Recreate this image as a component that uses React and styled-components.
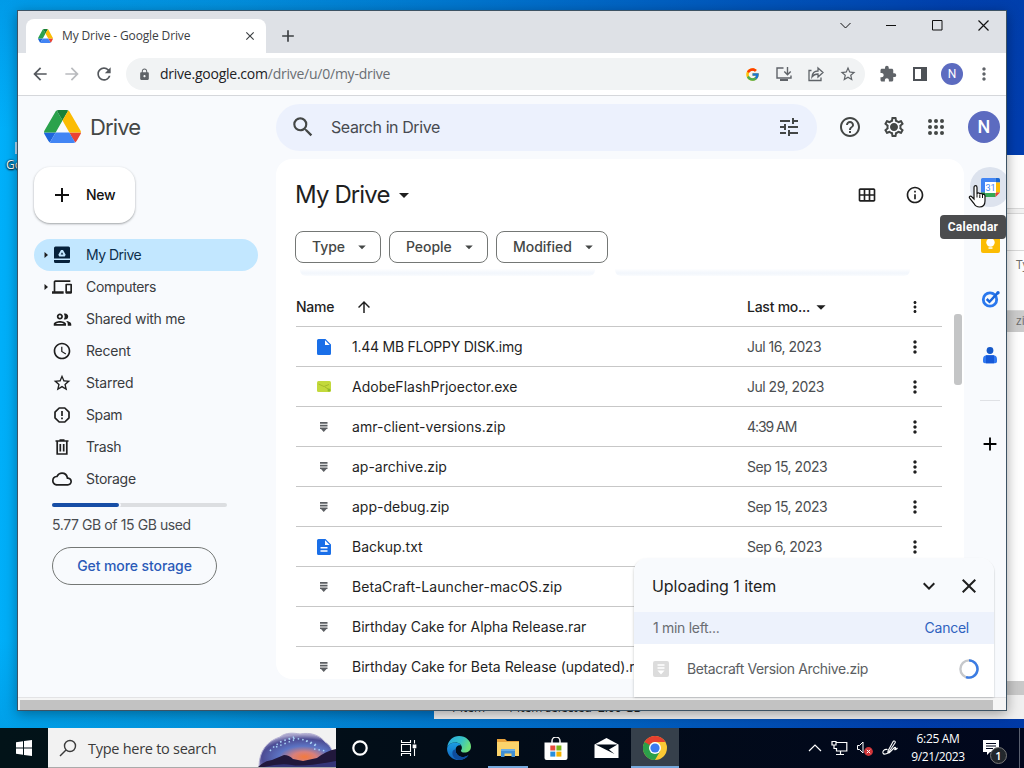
import React from 'react';
import styled, { createGlobalStyle } from 'styled-components';
import {
  MdAdd,
  MdArrowBack,
  MdArrowDropDown,
  MdArrowForward,
  MdArrowUpward,
  MdCalendarViewMonth,
  MdClose,
  MdDevices,
  MdExtension,
  MdHelpOutline,
  MdKeyboardArrowDown,
  MdLock,
  MdMoreVert,
  MdOutlineCloud,
  MdOutlineGroup,
  MdOutlineInfo,
  MdOutlineSettings,
  MdRefresh,
  MdSchedule,
  MdSearch,
  MdStarBorder,
  MdTune
} from 'react-icons/md';
import { FcGoogle } from 'react-icons/fc';

const google = `Inter, Roboto, 'Liberation Sans', sans-serif`;
const segoe = `'Open Sans', 'Noto Sans', sans-serif`;

const GlobalStyle = createGlobalStyle`
  * {
    box-sizing: border-box;
  }
  body {
    margin: 0;
    overflow: hidden;
  }
  svg {
    display: block;
    flex: none;
  }
`;

const Screen = styled.div`
  width: 1024px;
  height: 768px;
  display: flex;
  flex-direction: column;
  overflow: hidden;
  font-family: ${google};
`;

const Desktop = styled.div`
  position: relative;
  flex: 1;
  overflow: hidden;
  background: linear-gradient(
      180deg,
      rgba(0, 70, 160, 0.2) 0,
      rgba(0, 70, 160, 0) 130px,
      rgba(0, 30, 90, 0) 640px,
      rgba(0, 30, 90, 0.1) 728px
    ),
    linear-gradient(
      92deg,
      #00b0fa 0%,
      #03a0ea 22%,
      #0078d4 50%,
      #0058c0 72%,
      #0040b2 90%,
      #003cae 100%
    );
`;

const DesktopLabel = styled.span`
  position: absolute;
  left: 6px;
  top: 157px;
  color: #fff;
  font: 12px/16px ${segoe};
  text-shadow: 0 1px 2px #000, 0 0 2px #000;
`;

const DesktopShortcut = styled.span`
  position: absolute;
  left: 15px;
  top: 142px;
  width: 2px;
  height: 12px;
  background: #b5dcf6;
`;

/* File explorer, mostly covered by the browser */
const Explorer = styled.div`
  position: absolute;
  left: 434px;
  top: 155px;
  width: 680px;
  height: 564px;
  display: flex;
  flex-direction: column;
  background: #fff;
  color: #6d6d6d;
  font: 12px/16px ${segoe};
`;

const ExplorerBar = styled.div`
  height: ${props => props.$height}px;
  padding-top: ${props => props.$pad || 0}px;
  padding-left: 582px;
  background: ${props => props.$bg || '#fdfdfd'};
  border-bottom: 1px solid ${props => props.$line || '#d9d9d9'};
`;

const ExplorerBody = styled.div`
  flex: 1;
`;

const ExplorerStatus = styled.div`
  height: 24px;
  padding: 5px 16px 0;
  display: flex;
  gap: 22px;
  background: #f0f0f0;
  color: #222;
  font-size: 12px;
  line-height: 16px;
`;

const Browser = styled.div`
  position: absolute;
  left: 17px;
  top: 10px;
  width: 990px;
  height: 701px;
  display: flex;
  flex-direction: column;
  background: #fff;
  border: 1px solid #3d5364;
  box-shadow: 0 3px 12px rgba(0, 0, 0, 0.35);
`;

const TitleBar = styled.div`
  height: 42px;
  flex: none;
  display: flex;
  align-items: flex-end;
  padding-left: 8px;
  background: #dee1e6;
`;

const Tab = styled.div`
  width: 240px;
  height: 34px;
  display: flex;
  align-items: center;
  padding: 0 9px 0 12px;
  border-radius: 8px 8px 0 0;
  background: #fff;
  color: #3c4043;
`;

const TabTitle = styled.span`
  flex: 1;
  margin-left: 9px;
  font: 12px/16px ${segoe};
  letter-spacing: -0.13px;
`;

const NewTab = styled.div`
  margin: 0 auto 7px 12px;
  color: #3c4043;
`;

const WindowButtons = styled.div`
  display: flex;
  align-self: flex-start;
  color: #111;
`;

const WindowButton = styled.div`
  width: 46px;
  height: 29px;
  display: grid;
  place-items: center;
`;

const Toolbar = styled.div`
  height: 43px;
  flex: none;
  display: flex;
  align-items: center;
  padding-left: 12px;
  border-bottom: 1px solid #d5d7db;
  background: #fff;
  color: #5f6368;
`;

const NavButton = styled.div`
  width: 32px;
  display: flex;
  color: ${props => (props.$dim ? '#b9bbbe' : '#54585d')};
`;

const AddressBar = styled.div`
  width: 739px;
  height: 32px;
  display: flex;
  align-items: center;
  margin-right: 7px;
  padding: 0 1px 0 12px;
  border-radius: 17px;
  background: #f1f3f4;
`;

const Url = styled.div`
  flex: 1;
  margin-left: 9px;
  color: #6a6e73;
  font: 14px/20px ${segoe};
  letter-spacing: ${props => props.$track}px;

  b {
    color: #202124;
    font-weight: 400;
  }
`;

const IconStrip = styled.div`
  display: flex;
  align-items: center;
`;

const IconSlot = styled.div`
  width: 32px;
  display: grid;
  place-items: center;
`;

const Avatar = styled.div`
  width: ${props => props.$size}px;
  height: ${props => props.$size}px;
  display: grid;
  place-items: center;
  border-radius: 50%;
  background: #5c6bc0;
  color: #fff;
  font: ${props => props.$weight || 400} ${props => props.$font}px/1 Roboto, sans-serif;
`;

const Page = styled.div`
  height: 601px;
  flex: none;
  display: flex;
  flex-direction: column;
  overflow: hidden;
  background: #f8fafd;
`;

const Header = styled.div`
  height: 63px;
  flex: none;
  display: flex;
  align-items: center;
  padding: 0 6px 0 26px;
  color: #444746;
`;

const Brand = styled.div`
  width: 232px;
  display: flex;
  align-items: center;
  gap: 9px;
  padding-bottom: 2px;
  color: #444746;
  font-size: 22px;
  line-height: 28px;
  letter-spacing: ${props => props.$track}px;
`;

const SearchBox = styled.div`
  width: 541px;
  height: 47px;
  display: flex;
  align-items: center;
  padding: 0 16px 1px 14px;
  border-radius: 24px;
  background: #ecf1fd;
`;

const SearchText = styled.span`
  flex: 1;
  margin-left: 15px;
  color: #474a50;
  font-size: 16px;
  letter-spacing: ${props => props.$track}px;
`;

const HeaderIcons = styled.div`
  flex: 1;
  display: flex;
  align-items: center;
  padding: 0 0 1px 21px;
`;

const HeaderIcon = styled.div`
  width: 24px;
  display: grid;
  place-items: center;
  margin-right: ${props => props.$gap}px;
`;

const Main = styled.div`
  flex: 1;
  min-height: 0;
  display: flex;
`;

const Sidebar = styled.div`
  width: 258px;
  flex: none;
  padding: 8px 18px 0 16px;
`;

const NewButton = styled.div`
  width: 101px;
  height: 56px;
  display: flex;
  align-items: center;
  gap: 12px;
  padding: 0 0 1px 16px;
  border-radius: 16px;
  background: #fff;
  box-shadow: 0 1px 2px rgba(60, 64, 67, 0.35), 0 1px 3px rgba(60, 64, 67, 0.15);
  color: #111;
  font-size: 14px;
  font-weight: 500;
  letter-spacing: ${props => props.$track}px;
`;

const NavList = styled.div`
  margin-top: 16px;
`;

const NavItem = styled.div`
  height: 32px;
  display: flex;
  align-items: center;
  padding-left: 10px;
  border-radius: 16px;
  background: ${props => (props.$active ? '#c2e7ff' : 'transparent')};
  color: #1f1f1f;

  svg.caret {
    visibility: ${props => (props.$expandable ? 'visible' : 'hidden')};
  }
`;

const NavIcon = styled.span`
  width: 20px;
  margin: 0 14px 0 4px;
  display: grid;
  place-items: center;
`;

const NavLabel = styled.span`
  padding-bottom: 1px;
  color: ${props => (props.$active ? '#0d2f4d' : '#3a3c3f')};
  font-size: 14px;
  line-height: 17px;
  letter-spacing: ${props => props.$track || 0}px;
`;

const Storage = styled.div`
  padding: 8px 31px 0 18px;
`;

const StorageTrack = styled.div`
  height: 4px;
  border-radius: 2px;
  background: #dcdee1;
`;

const StorageFill = styled.div`
  height: 4px;
  border-radius: 2px;
  background: #174ea6;
  box-shadow: 2px 0 0 #f8fafd;
`;

const StorageText = styled.div`
  margin-top: 8px;
  color: #494c50;
  font-size: 14px;
  line-height: 20px;
  white-space: nowrap;
  letter-spacing: ${props => props.$track}px;
`;

const StorageButton = styled.div`
  width: 165px;
  height: 38px;
  display: grid;
  place-items: center;
  margin-top: 12px;
  padding-bottom: 1px;
  border: 1px solid #747775;
  border-radius: 19px;
  color: #2b5ab8;
  font-size: 14px;
  font-weight: 500;
  white-space: nowrap;
  letter-spacing: ${props => props.$track}px;
`;

const Panel = styled.div`
  width: 688px;
  height: 520px;
  flex: none;
  display: flex;
  overflow: hidden;
  padding-left: 20px;
  border-radius: 16px;
  background: #fff;
`;

const Content = styled.div`
  width: 646px;
  flex: none;
`;

const TitleRow = styled.div`
  height: 72px;
  display: flex;
  align-items: center;
  color: #1f1f1f;
`;

const Title = styled.h1`
  margin: 0 2px 0 -1px;
  font-size: 24px;
  font-weight: 400;
  line-height: 32px;
  letter-spacing: ${props => props.$track}px;
`;

const TitleActions = styled.div`
  display: flex;
  gap: 28px;
  margin-left: auto;
  margin-right: 17px;
`;

const Chips = styled.div`
  display: flex;
  gap: 8px;
  margin-left: -1px;
`;

const Chip = styled.div`
  width: ${props => props.$width}px;
  height: 32px;
  display: flex;
  align-items: center;
  justify-content: space-between;
  padding: 0 9px 1px 16px;
  border: 1px solid #747775;
  border-radius: 8px;
  color: #444746;
  font-size: 14px;
  font-weight: 500;
  letter-spacing: -0.05px;
`;

const CardEdges = styled.div`
  height: 24px;
  display: flex;
  gap: 20px;
  padding: 6px 0 0 4px;
`;

const CardEdge = styled.div`
  width: 295px;
  height: 7px;
  border-radius: 0 0 6px 6px;
  background: linear-gradient(#fdfeff, #f2f6fc 60%, #fafcfe);
`;

const ListHeader = styled.div`
  height: 40px;
  display: grid;
  grid-template-columns: 451px 1fr 54px;
  align-items: center;
  border-bottom: 1px solid #c7c7c7;
  color: #1f1f1f;
  font-size: 14px;
  font-weight: 500;
`;

const HeaderCell = styled.div`
  display: flex;
  align-items: center;
  gap: ${props => props.$gap}px;
  justify-content: ${props => (props.$center ? 'center' : 'flex-start')};
  letter-spacing: ${props => props.$track || 0}px;
`;

const FileRow = styled.div`
  height: 40px;
  display: grid;
  grid-template-columns: 56px 395px 1fr 54px;
  align-items: center;
  border-bottom: 1px solid #c7c7c7;
  font-size: 14px;
  color: #1f1f1f;
`;

const Cell = styled.div`
  display: flex;
  justify-content: center;
`;

const FileName = styled.div`
  white-space: nowrap;
  letter-spacing: ${props => props.$track || 0}px;
`;

const FileDate = styled.div`
  color: #4b4e51;
  white-space: nowrap;
  letter-spacing: ${props => props.$track || 0}px;
`;

const Scrollbar = styled.div`
  width: 8px;
  height: 71px;
  margin: 155px 0 0 12px;
  border-radius: 3px;
  background: #c4c5c6;
`;

const SidePanel = styled.div`
  width: 42px;
  display: flex;
  flex-direction: column;
  align-items: flex-start;
  padding-top: 8px;
`;

const SideApp = styled.div`
  width: 40px;
  height: 40px;
  display: grid;
  place-items: center;
  flex: none;
  margin: 0 0 16px 6px;
  border-radius: 50%;
  background: ${props => (props.$hover ? '#dde3ee' : 'transparent')};
`;

const SideDivider = styled.div`
  width: 20px;
  height: 1px;
  margin: 9px 0 23px 16px;
  background: #dfe1e5;
`;

const HorizontalScroll = styled.div`
  flex: 1;
  display: flex;
  align-items: flex-end;
  padding: 0 0 0 2px;
  border-top: 1px solid #e3e3e5;
  background: #f5f5f5;
`;

const HorizontalThumb = styled.div`
  width: 973px;
  height: 10px;
  background: #c2c2c2;
`;

const Tooltip = styled.div`
  position: absolute;
  left: 940px;
  top: 215px;
  width: 66px;
  height: 24px;
  display: grid;
  place-items: center;
  border-radius: 4px;
  background: #4b4c4e;
  color: #fff;
  font: 700 12px/16px Roboto, sans-serif;
  letter-spacing: 0.3px;
`;

const Pointer = styled.svg`
  position: absolute;
  left: 967px;
  top: 184px;
`;

const Upload = styled.div`
  position: absolute;
  left: 634px;
  top: 558px;
  width: 360px;
  height: 139px;
  display: flex;
  flex-direction: column;
  overflow: hidden;
  border-radius: 14px 14px 0 0;
  background: #fff;
  box-shadow: -1px 1px 2px rgba(60, 64, 67, 0.15), 1px 1px 1px rgba(60, 64, 67, 0.1);
`;

const UploadHeader = styled.div`
  height: 54px;
  display: flex;
  align-items: center;
  gap: 16px;
  padding: 2px 13px 0 18px;
  background: #f8fafd;
  color: #1f1f1f;
  font-size: 16px;
`;

const UploadTitle = styled.span`
  flex: 1;
  padding-bottom: 1px;
  letter-spacing: ${props => props.$track}px;
`;

const UploadStatus = styled.div`
  height: 32px;
  display: flex;
  align-items: center;
  justify-content: space-between;
  padding: 0 25px 1px 19px;
  background: #edf2fc;
  color: #6a6d72;
  font-size: 14px;
  letter-spacing: ${props => props.$track}px;
`;

const Cancel = styled.span`
  color: #2f62c0;
  letter-spacing: ${props => props.$track}px;
`;

const UploadItem = styled.div`
  height: 50px;
  display: flex;
  align-items: center;
  padding: 0 15px 1px 19px;
  color: #5b5e62;
  font-size: 14px;
`;

const UploadName = styled.span`
  flex: 1;
  margin-left: 18px;
  letter-spacing: ${props => props.$track}px;
`;

const Taskbar = styled.div`
  height: 40px;
  flex: none;
  display: flex;
  background: linear-gradient(90deg, #021318, #020c18 50%, #01071d);
  color: #fff;
`;

const Start = styled.div`
  width: 48px;
  display: grid;
  place-items: center;
`;

const TaskSearch = styled.div`
  width: 288px;
  display: flex;
  align-items: center;
  padding-left: 11px;
  border-bottom: 1px solid #aaa;
  background: #f2f2f2;
  color: #3b3b3b;
  font: 14.5px/20px ${segoe};
`;

const TaskSearchText = styled.span`
  flex: 1;
  margin-left: 11px;
  padding-top: 2px;
  white-space: nowrap;
  letter-spacing: ${props => props.$track}px;
`;

const Task = styled.div`
  width: ${props => props.$width}px;
  display: flex;
  justify-content: center;
  align-items: center;
  background: ${props => (props.$active ? '#36404b' : 'transparent')};
`;

const TaskMark = styled.div`
  width: ${props => props.$width}px;
  height: 40px;
  display: grid;
  place-items: center;
  border-top: 2px solid transparent;
  border-bottom: 2px solid #76a9dd;
`;

const Tray = styled.div`
  flex: 1;
  display: flex;
  align-items: center;
  padding-left: 129px;
  padding-right: 4px;
`;

const TrayIcons = styled.div`
  display: flex;
  align-items: center;
  gap: 9px;
`;

const Clock = styled.div`
  width: 54px;
  margin-left: 12px;
  text-align: center;
  font: 12px/18px ${segoe};
  white-space: nowrap;
  letter-spacing: ${props => props.$track}px;
`;

const Notifications = styled.div`
  margin-left: 18px;
  position: relative;
`;

const NotificationCount = styled.span`
  position: absolute;
  left: 7px;
  top: 7px;
  width: 17px;
  height: 17px;
  border: 1px solid #777;
  border-radius: 50%;
  background: #22272c;
  font: 600 11px/15px ${segoe};
  text-align: center;
`;

const ShowDesktop = styled.div`
  width: 1px;
  align-self: stretch;
  margin-left: auto;
  background: #5a6070;
`;

const DriveLogo = ({ width, height }) => (
  <svg width={width} height={height} viewBox="0 0 87.3 78" preserveAspectRatio="none">
    <path d="m6.6 66.85 3.85 6.65c.8 1.4 1.95 2.5 3.3 3.3l13.75-23.8h-27.5c0 1.55.4 3.1 1.2 4.5z" fill="#1e66db" />
    <path d="m43.65 25-13.75-23.8c-1.35.8-2.5 1.9-3.3 3.3l-25.4 44a9.06 9.06 0 0 0 -1.2 4.5h27.5z" fill="#2ba24c" />
    <path d="m73.55 76.8c1.35-.8 2.5-1.9 3.3-3.3l1.6-2.75 7.65-13.25c.8-1.4 1.2-2.95 1.2-4.5h-27.5l5.85 11.5z" fill="#ea4335" />
    <path d="m43.65 25 13.75-23.8c-1.35-.8-2.9-1.2-4.5-1.2h-18.5c-1.6 0-3.15.45-4.5 1.2z" fill="#188038" />
    <path d="m59.8 53h-32.3l-13.75 23.8c1.35.8 2.9 1.2 4.5 1.2h50.8c1.6 0 3.15-.45 4.5-1.2z" fill="#4285f4" />
    <path d="m73.4 26.5-12.7-22c-.8-1.4-1.95-2.5-3.3-3.3l-13.75 23.8 16.15 28h27.45c0-1.55-.4-3.1-1.2-4.5z" fill="#fbbc04" />
  </svg>
);

const Stroke = ({ w = 20, h = 20, width = 1, children }) => (
  <svg width={w} height={h} viewBox={`0 0 ${w} ${h}`} fill="none" stroke="currentColor" strokeWidth={width}>
    {children}
  </svg>
);

const Caret = () => (
  <svg className="caret" width="4" height="8" viewBox="0 0 4 8">
    <path d="M0.5 1 4 4 0.5 7z" fill="#1f1f1f" />
  </svg>
);

const AppsIcon = () => (
  <svg width="18" height="18" viewBox="0 0 18 18" fill="#444746">
    {[3, 9, 15].map(y => [3, 9, 15].map(x => <circle key={`${x}-${y}`} cx={x} cy={y} r="2" />))}
  </svg>
);

const GearIcon = () => (
  <svg width="24" height="24" viewBox="0 0 24 24">
    <MdOutlineSettings size={24} />
    <circle cx="12" cy="12" r="3" fill="#444746" />
  </svg>
);

const MyDriveIcon = () => (
  <svg width="16" height="18" viewBox="0 0 16 18">
    <path d="M1.5 0.5h13a1.5 1.5 0 0 1 1.500 1.500v10.500H0V2A1.500 1.500 0 0 1 1.500.5zM0 14h16v1.500a1.500 1.500 0 0 1-1.500 1.500h-13A1.500 1.500 0 0 1 0 15.500z" fill="#06213a" />
    <path d="M7 4h2l2.700 4.700-1 1.700H5.300l-1-1.700z" fill="#c2e7ff" />
    <path d="M8 6.200 9.300 8.600H6.700z" fill="#06213a" />
  </svg>
);

const SpamIcon = () => (
  <Stroke w={16} h={16} width={1.7}>
    <path d="M5.200 1h5.600L15 5.200v5.600L10.800 15H5.200L1 10.800V5.200z" strokeLinejoin="round" />
    <path d="M8 4v5M8 10.500v1.700" />
  </Stroke>
);

const TrashIcon = () => (
  <Stroke w={14} h={16} width={1.7}>
    <path d="M0.500 2h13M4.500 1h5M2.200 2v13h9.600V2M5.300 5v7.500M8.700 5v7.500" />
  </Stroke>
);

const DocIcon = ({ lines }) => (
  <svg width="14" height="16" viewBox="0 0 14 16">
    <path d="M1.500 0H8.500L14 5.500V14.500A1.500 1.500 0 0 1 12.500 16H1.500A1.500 1.500 0 0 1 0 14.500V1.500A1.500 1.500 0 0 1 1.500 0z" fill="#1a6fe8" />
    <path d="M8 1.300V6h4.700z" fill="#fff" />
    {lines && <path d="M3.500 8.700h7M3.500 12h7" stroke="#fff" strokeWidth="1.400" />}
  </svg>
);

const ExeIcon = () => (
  <svg width="14" height="11" viewBox="0 0 14 11">
    <rect width="14" height="11" rx="1.500" fill="#c3d93c" />
    <path d="M1.500 3 7 5.500 12 3.500M8 6l4 2.500" stroke="#a5bb2b" fill="none" />
    <circle cx="12" cy="9" r="1.500" fill="#8fbb2a" />
  </svg>
);

const ZipIcon = () => (
  <svg width="9" height="10" viewBox="0 0 9 10">
    <path d="M0 0h7.500v1.800h-7.500zM0 2.800h7.500v1.800h-7.500zM0 5.600h7.500v1.300H6.500L3.750 10 1 6.900H0z" fill="#5c5f63" />
  </svg>
);

const UploadZipIcon = () => (
  <svg width="16" height="16" viewBox="0 0 16 16">
    <rect width="16" height="16" rx="2" fill="#dcdcdc" />
    <path d="M4.500 4h7M4.500 7h7" stroke="#fff" strokeWidth="1.600" />
    <path d="M4.500 9.500h7L8 13.500z" fill="#fff" />
  </svg>
);

const CalendarIcon = () => (
  <svg width="19" height="19" viewBox="0 0 19 19">
    <path d="M1.500 0H14.500V4.500H4.500V14.500H0V1.500A1.500 1.500 0 0 1 1.500 0z" fill="#4285f4" />
    <path d="M14.500 0H17.500A1.500 1.500 0 0 1 19 1.500V4.500H14.500z" fill="#1967d2" />
    <path d="M14.500 4.500H19V14.500H14.500z" fill="#fbbc04" />
    <path d="M4.500 14.500H14.500V19H4.500z" fill="#34a853" />
    <path d="M0 14.500H4.500V19H1.500A1.500 1.500 0 0 1 0 17.500z" fill="#188038" />
    <path d="M14.500 14.500H19L14.500 19z" fill="#ea4335" />
    <path d="M4 4h11v11H4z" fill="#fff" />
    <text x="9.500" y="12.700" fontFamily="Roboto, sans-serif" fontSize="9" textAnchor="middle" fill="#4285f4">31</text>
  </svg>
);

const KeepIcon = () => (
  <svg width="19" height="19" viewBox="0 0 19 19">
    <rect width="19" height="19" rx="2" fill="#fbbc04" />
    <circle cx="9.500" cy="8.500" r="4.200" fill="#fff" />
    <path d="M7.500 13.300h4v1.500h-4z" fill="#fff" />
  </svg>
);

const TasksIcon = () => (
  <svg width="19" height="18" viewBox="0 0 19 18" fill="none">
    <circle cx="9" cy="9.500" r="6.700" stroke="#2a78ee" strokeWidth="2.800" />
    <path d="m5.700 9 2.800 2.800L16.500 3.200" stroke="#1a66dc" strokeWidth="2.500" />
    <circle cx="17" cy="2.700" r="1.700" fill="#1a66dc" />
  </svg>
);

const ContactsIcon = () => (
  <svg width="14" height="17" viewBox="0 0 14 17">
    <circle cx="7" cy="3.500" r="3.400" fill="#1558c8" />
    <path d="M4 8.200h6a4 4 0 0 1 4 4v2.300A1.800 1.800 0 0 1 12.200 16.300H1.800A1.800 1.800 0 0 1 0 14.500v-2.300a4 4 0 0 1 4-4z" fill="#3078f0" />
    <path d="M3 8.300h8v8H3z" fill="#1558d8" />
  </svg>
);

const Spinner = () => (
  <svg width="20" height="20" viewBox="0 0 20 20" fill="none" strokeWidth="2.400">
    <circle cx="10" cy="10" r="8.600" stroke="#c6c8cb" />
    <path d="M10 1.400a8.600 8.600 0 1 1-3 16.700" stroke="#3b7ce4" />
  </svg>
);

const EdgeIcon = () => (
  <svg width="24" height="24" viewBox="0 0 24 24">
    <defs>
      <linearGradient id="edgeTop" x1="0" y1="0" x2="1" y2="0.400">
        <stop offset="0" stopColor="#2aa8e0" />
        <stop offset="0.600" stopColor="#35c1c8" />
        <stop offset="1" stopColor="#6be07a" />
      </linearGradient>
      <linearGradient id="edgeSide" x1="0" y1="0" x2="0" y2="1">
        <stop offset="0" stopColor="#1b9de2" />
        <stop offset="1" stopColor="#1263bd" />
      </linearGradient>
    </defs>
    <path d="M.3 11C1 4.500 6 0 12 0c7 0 12 5 12 10.500 0 4-3 6-6.500 6-2.500 0-3.600-1-3.600-1.800 0-.7 1-1.200 1-3C14.900 9 12 6.500 8.500 6.500 4.500 6.500 1.500 8.500.3 11z" fill="url(#edgeTop)" />
    <path d="M.1 12.500C.5 8.500 4.500 6.500 8.500 6.500c3 0 5 1.500 5.600 3-3-.8-5.500 1.300-5.500 4.500 0 4 3.500 7.500 8 7 1.600-.2 3.600-.9 4.900-2C19.300 22.200 16 24 12 24 5 24-.3 18.500.1 12.500z" fill="url(#edgeSide)" />
    <path d="M8.600 13.500c-.4 4.300 3.400 8 8 7.500 1.900-.2 3.900-1.200 5-2.200-2 3.200-5.500 5.300-9.500 5.200C7.500 23.500 4.800 20 5.500 16c.4-2 1.600-2.800 3.100-2.500z" fill="#0e4c9c" />
  </svg>
);

const FolderIcon = () => (
  <svg width="22" height="19" viewBox="0 0 22 19">
    <path d="M0 0h8l2 2h12v6H0z" fill="#e9a33b" />
    <path d="M0 3h22v14H0z" fill="#fbd36b" />
    <path d="M4 10.500h14V18h-3.500v-3.500h-7V18H4z" fill="#3f8fd6" />
    <path d="M4 10h14v2H4z" fill="#69aee6" />
  </svg>
);

const StoreIcon = () => (
  <svg width="24" height="23" viewBox="0 0 24 23">
    <path d="M8 7V4a4 4 0 0 1 8 0v3" stroke="#f3f3f3" strokeWidth="1.500" fill="none" />
    <path d="M.5 5.500h23V21a2 2 0 0 1-2 2h-19a2 2 0 0 1-2-2z" fill="#fff" />
    <path d="M6.300 8.500h5v5h-5z" fill="#e74c3c" />
    <path d="M12.400 8.500h5v5h-5z" fill="#7cb518" />
    <path d="M6.300 14.600h5v5h-5z" fill="#2a8fdd" />
    <path d="M12.400 14.600h5v5h-5z" fill="#f5b301" />
  </svg>
);

const MailIcon = () => (
  <svg width="25" height="20" viewBox="0 0 25 20">
    <path d="M.5 6.500 12.500 0l12 6.500V20H.5z" fill="#fff" />
    <path d="M1.500 6.500h22l-8.500 5 5.500 4.500z" fill="#020c18" />
  </svg>
);

const ChromeIcon = () => (
  <svg width="24" height="24" viewBox="0 0 24 24">
    <circle cx="12" cy="12" r="12" fill="#fcc934" />
    <path d="M1.600 6A12 12 0 0 0 12 24l5.200-9L12 12z" fill="#2ca04a" />
    <path d="M1.600 6 6.800 15 12 12 9 6z" fill="#2ca04a" />
    <path d="M1.600 6A12 12 0 0 1 22.400 6H12a6 6 0 0 0-5.200 3z" fill="#e5402f" />
    <circle cx="12" cy="12" r="6" fill="#fff" />
    <circle cx="12" cy="12" r="4.600" fill="#3a7af0" />
  </svg>
);

/* Canyon under a night sky, right end of the search box */
const SearchArt = () => (
  <svg width="78" height="38" viewBox="0 0 78 38">
    <defs>
      <radialGradient id="sky" cx="0.580" cy="0.720" r="0.680" fx="0.600" fy="0.700">
        <stop offset="0" stopColor="#f47a3c" />
        <stop offset="0.220" stopColor="#d8807c" />
        <stop offset="0.480" stopColor="#5c74c4" />
        <stop offset="0.800" stopColor="#4c4c94" />
        <stop offset="1" stopColor="#a9a4cc" />
      </radialGradient>
    </defs>
    <path d="M1 38C1 22 9 12 22 8c6-5 14-4 20-3 10-2 20 1 25 8 5 3 7 7 8 13l2 12z" fill="url(#sky)" stroke="#b6b2d4" />
    <path d="M12 22q8-10 20-12t26 6M18 18l18-7M22 13l14-5M56 20l12 2M48 12l10 5" stroke="#a9d2f6" strokeWidth="1.500" strokeDasharray="1.500 3" fill="none" />
    <path d="M0 38q6-6 14-7l12-5q5 0 9 4l10 2 14-3q9-7 19-9v18z" fill="#21183c" />
    <path d="M6 38q16-4 28-2t44-4v6z" fill="#343578" />
  </svg>
);

const navItems = [
  { label: 'My Drive', icon: <MyDriveIcon />, active: true, expandable: true, track: -0.5 },
  { label: 'Computers', icon: <MdDevices size={20} />, expandable: true, track: -0.32 },
  { label: 'Shared with me', icon: <MdOutlineGroup size={21} />, track: -0.27 },
  { label: 'Recent', icon: <MdSchedule size={20} />, track: -0.25 },
  { label: 'Starred', icon: <MdStarBorder size={20} />, track: -0.2 },
  { label: 'Spam', icon: <SpamIcon />, track: -0.4 },
  { label: 'Trash', icon: <TrashIcon />, track: -0.4 },
  { label: 'Storage', icon: <MdOutlineCloud size={20} />, track: -0.27 }
];

const files = [
  { name: '1.44 MB FLOPPY DISK.img', track: -0.24, date: 'Jul 16, 2023', dateTrack: -0.5, icon: <DocIcon /> },
  { name: 'AdobeFlashPrjoector.exe', date: 'Jul 29, 2023', dateTrack: -0.5, icon: <ExeIcon /> },
  { name: 'amr-client-versions.zip', track: 0.03, date: '4:39 AM', dateTrack: -1.05, icon: <ZipIcon /> },
  { name: 'ap-archive.zip', date: 'Sep 15, 2023', dateTrack: -0.48, icon: <ZipIcon /> },
  { name: 'app-debug.zip', date: 'Sep 15, 2023', dateTrack: -0.48, icon: <ZipIcon /> },
  { name: 'Backup.txt', date: 'Sep 6, 2023', dateTrack: -0.5, icon: <DocIcon lines /> },
  { name: 'BetaCraft-Launcher-macOS.zip', track: 0.07, icon: <ZipIcon /> },
  { name: 'Birthday Cake for Alpha Release.rar', track: -0.02, icon: <ZipIcon /> },
  { name: 'Birthday Cake for Beta Release (updated).rar', icon: <ZipIcon /> }
];

const BrowserTop = () => (
  <>
    <TitleBar>
      <Tab>
        <DriveLogo width={15} height={14} />
        <TabTitle>My Drive - Google Drive</TabTitle>
        <MdClose size={14} />
      </Tab>
      <NewTab>
        <MdAdd size={20} />
      </NewTab>
      <WindowButtons>
        <WindowButton>
          <Stroke w={11} h={11}><path d="M.5 3 5.500 8 10.500 3" /></Stroke>
        </WindowButton>
        <WindowButton>
          <Stroke w={11} h={11}><path d="M0 5.500h10" /></Stroke>
        </WindowButton>
        <WindowButton>
          <Stroke w={11} h={11}><path d="M.5.5h9.500v9.500H.5z" /></Stroke>
        </WindowButton>
        <WindowButton>
          <Stroke w={11} h={11} width={1.2}><path d="m.5.5 10 10M10.500.5l-10 10" /></Stroke>
        </WindowButton>
      </WindowButtons>
    </TitleBar>
    <Toolbar>
      <NavButton><MdArrowBack size={20} /></NavButton>
      <NavButton $dim><MdArrowForward size={20} /></NavButton>
      <NavButton><MdRefresh size={20} /></NavButton>
      <AddressBar>
        <MdLock size={13} />
        <Url $track={-0.24}>
          <b>drive.google.com</b>/drive/u/0/my-drive
        </Url>
        <IconStrip>
          <IconSlot><FcGoogle size={15} /></IconSlot>
          <IconSlot>
            <Stroke w={18} h={18} width={1.4}>
              <path d="M8.500 3H2v10h14v-2.500M12.500 2v7.500M9.300 6.500l3.200 3.200 3.200-3.200" />
              <path d="M5 15h8" strokeWidth="2" />
            </Stroke>
          </IconSlot>
          <IconSlot>
            <Stroke w={18} h={18} width={1.3}>
              <path d="M4.500 5.500H2V15.500H14V12.500M5 12c.3-4 2.500-6 6-6V3l5 4.500-5 4.500V9c-2.500 0-4.500.8-6 3z" />
            </Stroke>
          </IconSlot>
          <IconSlot><MdStarBorder size={18} /></IconSlot>
        </IconStrip>
      </AddressBar>
      <IconStrip>
        <IconSlot><MdExtension size={18} /></IconSlot>
        <IconSlot>
          <svg width="18" height="18" viewBox="0 0 18 18">
            <path d="M2 2h14v14H2zM4 4v10h6V4z" fill="#4d5156" fillRule="evenodd" />
          </svg>
        </IconSlot>
        <IconSlot><Avatar $size={22} $font={12}>N</Avatar></IconSlot>
        <IconSlot><MdMoreVert size={20} /></IconSlot>
      </IconStrip>
    </Toolbar>
  </>
);

const DriveSidebar = () => (
  <Sidebar>
    <NewButton $track={-0.3}>
      <MdAdd size={24} />
      New
    </NewButton>
    <NavList>
      {navItems.map(item => (
        <NavItem key={item.label} $active={item.active} $expandable={item.expandable}>
          <Caret />
          <NavIcon>{item.icon}</NavIcon>
          <NavLabel $active={item.active} $track={item.track}>{item.label}</NavLabel>
        </NavItem>
      ))}
    </NavList>
    <Storage>
      <StorageTrack>
        <StorageFill style={{ width: `${(5.77 / 15) * 100}%` }} />
      </StorageTrack>
      <StorageText $track={-0.4}>5.77 GB of 15 GB used</StorageText>
      <StorageButton $track={-0.08}>Get more storage</StorageButton>
    </Storage>
  </Sidebar>
);

const DrivePanel = () => (
  <Panel>
    <Content>
      <TitleRow>
        <Title $track={-0.88}>My Drive</Title>
        <MdArrowDropDown size={24} />
        <TitleActions>
          <MdCalendarViewMonth size={20} />
          <MdOutlineInfo size={20} />
        </TitleActions>
      </TitleRow>
      <Chips>
        <Chip $width={86}>Type<MdArrowDropDown size={18} /></Chip>
        <Chip $width={99}>People<MdArrowDropDown size={18} /></Chip>
        <Chip $width={112}>Modified<MdArrowDropDown size={18} /></Chip>
      </Chips>
      <CardEdges>
        <CardEdge />
        <CardEdge />
      </CardEdges>
      <ListHeader>
        <HeaderCell $gap={21} $track={-0.25}>
          Name
          <MdArrowUpward size={18} />
        </HeaderCell>
        <HeaderCell $gap={0} $track={-0.25}>
          Last mo...
          <MdArrowDropDown size={22} />
        </HeaderCell>
        <HeaderCell $center>
          <MdMoreVert size={18} />
        </HeaderCell>
      </ListHeader>
      {files.map(file => (
        <FileRow key={file.name}>
          <Cell>{file.icon}</Cell>
          <FileName $track={file.track}>{file.name}</FileName>
          <FileDate $track={file.dateTrack}>{file.date}</FileDate>
          <Cell><MdMoreVert size={20} /></Cell>
        </FileRow>
      ))}
    </Content>
    <Scrollbar />
  </Panel>
);

const DrivePage = () => (
  <Page>
    <Header>
      <Brand $track={-0.9}>
        <DriveLogo width={37} height={33} />
        Drive
      </Brand>
      <SearchBox>
        <MdSearch size={26} />
        <SearchText $track={-0.42}>Search in Drive</SearchText>
        <MdTune size={24} />
      </SearchBox>
      <HeaderIcons>
        <HeaderIcon $gap={20}><MdHelpOutline size={24} /></HeaderIcon>
        <HeaderIcon $gap={18}><GearIcon /></HeaderIcon>
        <HeaderIcon $gap={20}><AppsIcon /></HeaderIcon>
        <Avatar $size={32} $font={18} $weight={500}>N</Avatar>
      </HeaderIcons>
    </Header>
    <Main>
      <DriveSidebar />
      <DrivePanel />
      <SidePanel>
        <SideApp $hover><CalendarIcon /></SideApp>
        <SideApp><KeepIcon /></SideApp>
        <SideApp><TasksIcon /></SideApp>
        <SideApp><ContactsIcon /></SideApp>
        <SideDivider />
        <SideApp><MdAdd size={22} /></SideApp>
      </SidePanel>
    </Main>
  </Page>
);

const UploadDialog = () => (
  <Upload>
    <UploadHeader>
      <UploadTitle $track={-0.05}>Uploading 1 item</UploadTitle>
      <MdKeyboardArrowDown size={24} />
      <MdClose size={24} />
    </UploadHeader>
    <UploadStatus $track={-0.3}>
      1 min left...
      <Cancel $track={-0.25}>Cancel</Cancel>
    </UploadStatus>
    <UploadItem>
      <UploadZipIcon />
      <UploadName $track={-0.37}>Betacraft Version Archive.zip</UploadName>
      <Spinner />
    </UploadItem>
  </Upload>
);

const WindowsTaskbar = () => (
  <Taskbar>
    <Start>
      <svg width="16" height="16" viewBox="0 0 16 16">
        <path d="M0 2.200 7 1.200V7.500H0zM8 1 16 0V7.500H8zM0 8.500H7V14.800L0 13.800zM8 8.500H16V16L8 15z" fill="#fff" />
      </svg>
    </Start>
    <TaskSearch>
      <Stroke w={18} h={18} width={1.4}>
        <circle cx="11" cy="7" r="5.500" />
        <path d="M7 11 1 17" />
      </Stroke>
      <TaskSearchText $track={-0.27}>Type here to search</TaskSearchText>
      <SearchArt />
    </TaskSearch>
    <Task $width={48}>
      <Stroke w={16} h={16} width={2.2}><circle cx="8" cy="8" r="6.700" /></Stroke>
    </Task>
    <Task $width={48}>
      <Stroke w={17} h={16} width={1.1}>
        <path d="M1.500 0v2.500h9V0M1.500 16v-2.500h9V16M1.500 4.500h9v7h-9zM14.500 0v3.500M14.500 8.500V16" />
        <path d="M13.200 5h2.600v2.600h-2.600z" fill="currentColor" />
      </Stroke>
    </Task>
    <Task $width={54}><EdgeIcon /></Task>
    <Task $width={44}>
      <TaskMark $width={40}><FolderIcon /></TaskMark>
    </Task>
    <Task $width={52}><StoreIcon /></Task>
    <Task $width={49}><MailIcon /></Task>
    <Task $width={48} $active>
      <TaskMark $width={48}><ChromeIcon /></TaskMark>
    </Task>
    <Tray>
      <TrayIcons>
        <Stroke w={14} h={14} width={1.2}><path d="M1 10l6-6 6 6" /></Stroke>
        <Stroke w={17} h={16} width={1.2}>
          <path d="M4.500 2.500H15.800V11H5.500V8M5 14.500h8M9.500 11v3.500M1 1.500h4v3.500H1zM3 5v3.500h2.500" />
        </Stroke>
        <Stroke w={16} h={16}>
          <path d="M.5 5.500H2.500L6 2v11L2.500 9.500H.5z" />
          <circle cx="11.500" cy="11.500" r="4.400" fill="#d13438" stroke="none" />
          <path d="m9.800 9.800 3.400 3.400M13.200 9.800l-3.400 3.400" />
        </Stroke>
        <Stroke w={17} h={17} width={1.1}>
          <path d="M5.500 9.500C2 9 .5 11 1 13c.6 2 4 1 5.500-.5L13 3c1-1.500-1-3-2-1.200L6.500 10c-1.500 3 0 4 1.500 2l4.500-4.500c1-.8 1.500.5.5 1.500s.5 1 2.500-1" />
        </Stroke>
      </TrayIcons>
      <Clock $track={-0.35}>
        6:25 AM
        <br />
        9/21/2023
      </Clock>
      <Notifications>
        <svg width="17" height="17" viewBox="0 0 17 17">
          <path d="M0 0h16v12H7l-3 3v-3H0z" fill="#fff" />
          <path d="M3 3.500h10M3 6h10M3 8.500h7" stroke="#01071d" />
        </svg>
        <NotificationCount>1</NotificationCount>
      </Notifications>
      <ShowDesktop />
    </Tray>
  </Taskbar>
);

const App = () => (
  <Screen>
    <GlobalStyle />
    <Desktop>
      <DesktopShortcut />
      <DesktopLabel>Go</DesktopLabel>
      <Explorer>
        <ExplorerBar $height={54} />
        <ExplorerBar $height={5} $bg="#f2f2f2" />
        <ExplorerBar $height={37} />
        <ExplorerBar $height={60} $pad={6}>Ty</ExplorerBar>
        <ExplorerBar $height={21} $bg="#cccccc" $line="#cccccc" $pad={2}>zi</ExplorerBar>
        <ExplorerBody />
        <ExplorerBar $height={14} $bg="#c9c9c9" $line="#c9c9c9" />
        <ExplorerStatus>
          <span>1 item</span>
          <span>1 item selected&nbsp; 2.00 GB</span>
        </ExplorerStatus>
      </Explorer>
      <Browser>
        <BrowserTop />
        <DrivePage />
        <HorizontalScroll>
          <HorizontalThumb />
        </HorizontalScroll>
      </Browser>
      <UploadDialog />
      <Tooltip>Calendar</Tooltip>
      <Pointer width="20" height="24" viewBox="0 0 20 24">
        <path
          d="M7 15V3.500C7 1 10 1 10 3.500V10c0-1.500 2.800-1.500 2.800.3 0-1.200 2.700-1.200 2.700.6 0-1 2.500-.8 2.500 1V17c0 3.500-2 6-5.500 6-3 0-4.500-1.500-5.500-3.500L2.500 14c-.8-1.600 1.200-2.700 2.500-1z"
          fill="#fff"
          stroke="#111"
          strokeWidth="1.200"
        />
        <path d="M10 10v3.500M12.800 10.500V14M15.500 11v3" stroke="#111" />
      </Pointer>
    </Desktop>
    <WindowsTaskbar />
  </Screen>
);

export default App;
